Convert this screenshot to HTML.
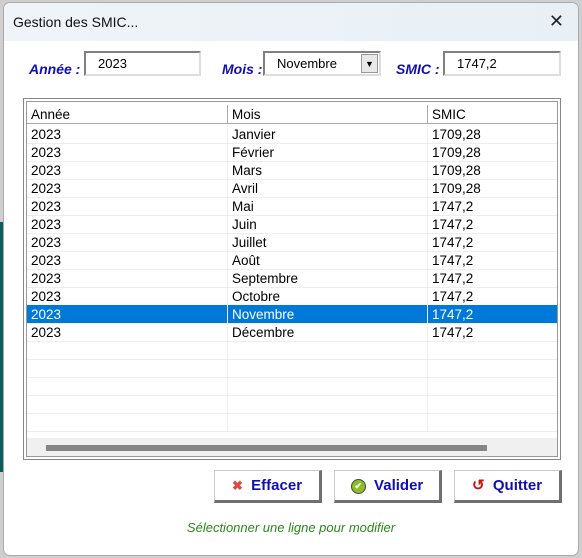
<!DOCTYPE html><html><head><meta charset="utf-8"><style>
body{margin:0;width:582px;height:558px;background:#cfcfcf;position:relative;overflow:hidden;font-family:"Liberation Sans",sans-serif}
.teal{position:absolute;left:0;top:222px;width:3px;height:250px;background:#0f5a5a}
.win{position:absolute;left:3px;top:2px;width:574px;height:552px;background:#fff;border:1px solid #aaa;border-radius:7px;overflow:hidden}
.title{height:38px;background:linear-gradient(90deg,#f0f4f8,#e8f0f6);font-size:14px;line-height:38px;padding-left:9px;color:#111}
.x{position:absolute;right:14px;top:8px;font-size:18px;color:#222}
.lbl{position:absolute;color:#1010b0;font-weight:bold;font-style:italic;font-size:14px}
.in{position:absolute;height:25px;border:2px solid #808080;border-right-color:#ddd;border-bottom-color:#ddd;background:#fff;font-size:13px;box-sizing:border-box;padding:3px 12px}
.grid{position:absolute;left:23px;top:98px;width:538px;height:362px;border:1px solid #888;box-sizing:border-box;background:#fff}
.inner{position:absolute;left:2px;top:2px;right:2px;bottom:2px;border:1px solid #999;overflow:hidden}
.row{position:absolute;left:0;width:540px;height:18px;font-size:13.5px;line-height:19px;border-bottom:1px solid #eee}
.row span{position:absolute;top:0;height:18px;padding-left:4px;border-right:1px solid #eee;box-sizing:border-box}
.hd{background:#fff;border-bottom:1px solid #aaa}
.hd span{border-right:1px solid #aaa}
.sel{background:#0078d7;color:#fff}
.sb{position:absolute;left:0;right:0;bottom:0;height:18px;background:#f0f0f0}
.sb div{position:absolute;left:19px;top:7px;width:441px;height:6px;background:#858585}
.btn{position:absolute;top:470px;height:33px;width:108px;background:#fff;border:1px solid #ccc;border-right:3px solid #707070;border-bottom:3px solid #707070;box-sizing:border-box;color:#1010b0;font-weight:bold;font-size:15px;line-height:30px;text-align:center}
.msg{position:absolute;left:0;width:582px;top:520px;text-align:center;color:#2a8a18;font-style:italic;font-size:13px}
</style></head><body>
<div class="teal"></div>
<div class="win">
<div class="title">Gestion des SMIC...</div><div class="x">✕</div>
</div>
<div class="lbl" style="left:29px;top:61px">Année :</div>
<div class="in" style="left:84px;top:51px;width:117px">2023</div>
<div class="lbl" style="left:222px;top:61px">Mois :</div>
<div class="in" style="left:263px;top:51px;width:118px;padding-left:12px">Novembre<div style="position:absolute;right:1px;top:1px;width:17px;height:19px;background:#e8e8e8;border:1px solid #999;box-sizing:border-box;font-size:9px;line-height:18px;text-align:center;padding:0">▼</div></div>
<div class="lbl" style="left:396px;top:61px">SMIC :</div>
<div class="in" style="left:443px;top:51px;width:118px">1747,2</div>
<div class="grid"><div class="inner">
<div class="row hd" style="top:3px"><span style="left:0;width:201px">Année</span><span style="left:201px;width:200px">Mois</span><span style="left:401px;width:140px">SMIC</span></div>
<div id="rows"></div>
<div class="sb"><div></div></div>
</div></div>
<div class="btn" style="left:214px"><span style="color:#e04848;font-size:13px">✖</span>&nbsp; Effacer</div>
<div class="btn" style="left:334px"><span style="display:inline-block;width:13px;height:13px;border-radius:50%;background:#8cbf26;border:1px solid #444;color:#fff;font-size:9px;line-height:13px;vertical-align:1px">✔</span>&nbsp; Valider</div>
<div class="btn" style="left:454px"><span style="color:#d01010">↺</span>&nbsp; Quitter</div>
<div class="msg">Sélectionner une ligne pour modifier</div>
<script>
var d=[["Janvier","1709,28"],["Février","1709,28"],["Mars","1709,28"],["Avril","1709,28"],["Mai","1747,2"],["Juin","1747,2"],["Juillet","1747,2"],["Août","1747,2"],["Septembre","1747,2"],["Octobre","1747,2"],["Novembre","1747,2"],["Décembre","1747,2"],["",""],["",""],["",""],["",""],["",""]];
var h="";d.forEach(function(r,i){h+='<div class="row'+(i==10?' sel':'')+'" style="top:'+(23+i*18)+'px"><span style="left:0;width:201px">'+(r[0]?"2023":"")+'</span><span style="left:201px;width:200px">'+r[0]+'</span><span style="left:401px;width:140px">'+r[1]+'</span></div>'});
document.getElementById("rows").innerHTML=h;
</script>
</body></html>
